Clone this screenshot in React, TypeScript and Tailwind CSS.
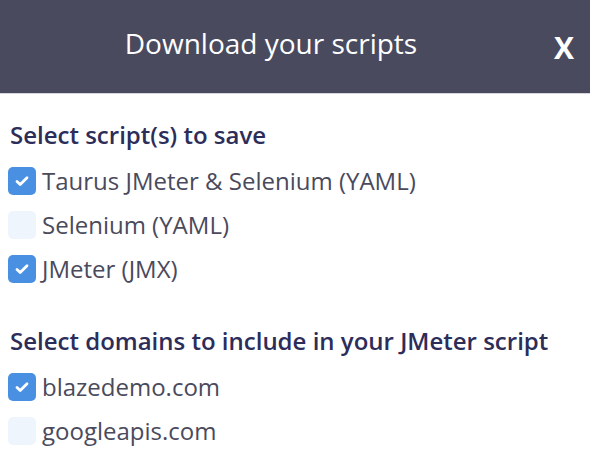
import React from "react";

type Item = { label: string; checked: boolean };

const scripts: Item[] = [
  { label: "Taurus JMeter & Selenium (YAML)", checked: true },
  { label: "Selenium (YAML)", checked: false },
  { label: "JMeter (JMX)", checked: true },
];

const domains: Item[] = [
  { label: "blazedemo.com", checked: true },
  { label: "googleapis.com", checked: false },
];

function Box({ checked }: { checked: boolean }) {
  if (!checked) return <span className="block w-[28px] h-[28px] rounded-[5px] bg-[#eef5fd] shrink-0" />;
  return (
    <span className="flex items-center justify-center w-[28px] h-[28px] rounded-[5px] bg-[#4a90e2] shrink-0">
      <svg width="16" height="16" viewBox="0 0 16 16" fill="none">
        <path d="M3 8.5l3.2 3L13 4.8" stroke="#fff" strokeWidth="2.8" strokeLinecap="round" strokeLinejoin="round" />
      </svg>
    </span>
  );
}

function Row({ item }: { item: Item }) {
  return (
    <div className="flex items-center gap-[6px] h-[44px]">
      <Box checked={item.checked} />
      <span className="text-[24px] text-[#4a4a5c]">{item.label}</span>
    </div>
  );
}

export default function App() {
  return (
    <div className="w-[590px] h-[462px] bg-white overflow-hidden" style={{ fontFamily: "'Open Sans', sans-serif" }}>
      <div className="relative h-[94px] bg-[#4a4a5f] border-b border-[#d4d4dc] flex justify-center pr-[48px] pt-[22px]">
        <h2 className="text-[28px] text-white">Download your scripts</h2>
        <span className="absolute right-[16px] top-[33px] text-[30px] font-bold text-white leading-none">X</span>
      </div>
      <div className="pl-[8px] pt-[19px]">
        <h3 className="pl-[2px] mb-[2px] text-[24px] font-semibold text-[#2d2d5a] leading-[44px]">Select script(s) to save</h3>
        {scripts.map((s) => (
          <Row key={s.label} item={s} />
        ))}
        <h3 className="pl-[2px] mt-[28px] mb-[2px] text-[24px] font-semibold text-[#2d2d5a] leading-[44px]">
          Select domains to include in your JMeter script
        </h3>
        {domains.map((s) => (
          <Row key={s.label} item={s} />
        ))}
      </div>
    </div>
  );
}
